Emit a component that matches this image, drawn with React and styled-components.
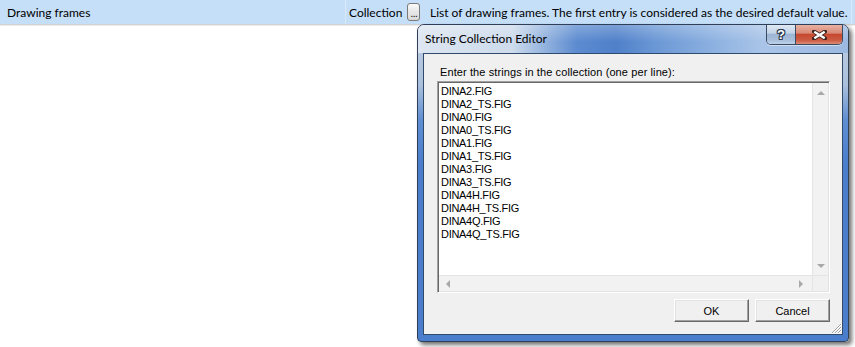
import React from "react";
import styled, { createGlobalStyle } from "styled-components";

const GlobalStyle = createGlobalStyle`
  html, body {
    margin: 0;
    padding: 0;
    background: #fff;
  }
  body {
    font-family: "Segoe UI", Lato, "Liberation Sans", sans-serif;
    color: #000;
  }
`;

const Page = styled.div`
  position: relative;
  width: 855px;
  height: 347px;
  overflow: hidden;
  background: #fff;
`;

const PropertyRow = styled.div`
  display: flex;
  height: 24px;
  background: #c5dff9;
  border-bottom: 1px solid #d2d2d2;
  box-shadow: 0 1px 0 #ececec;
`;

const Cell = styled.div`
  box-sizing: border-box;
  display: flex;
  align-items: center;
  width: ${(p) => p.$w}px;
  padding-left: ${(p) => p.$pad}px;
  border-right: ${(p) => (p.$line ? "1px solid #dce9f8" : "none")};
  font-size: 12px;
  white-space: nowrap;
`;

const EllipsisButton = styled.div`
  box-sizing: border-box;
  width: 13px;
  height: 18px;
  margin-left: 5px;
  border: 1px solid #7a7a7a;
  border-radius: 3px;
  background: linear-gradient(#fafafa, #e6e6e6 50%, #d9d9d9);
  display: flex;
  align-items: flex-end;
  justify-content: center;
  font-family: "Liberation Sans", sans-serif;
  font-size: 10px;
  line-height: 12px;
  letter-spacing: -0.5px;
`;

/* the dialog floats over the grid like a desktop window */
const Window = styled.div`
  position: absolute;
  left: 417px;
  top: 24px;
  width: 432px;
  height: 318px;
  box-sizing: border-box;
  display: flex;
  flex-direction: column;
  border: 1px solid #2f3f57;
  border-radius: 7px 7px 4px 4px;
  overflow: hidden;
  background: linear-gradient(
    #c3d1e3 0px,
    #aac0dc 60px,
    #5f8ed2 95px,
    #4a7dcb 140px,
    #4a7dcb 100%
  );
  box-shadow: 3px 3px 4px rgba(0, 0, 0, 0.55);
`;

const TitleBar = styled.div`
  height: 28px;
  flex: none;
  display: flex;
  justify-content: space-between;
  align-items: flex-start;
  padding: 0 5px 0 7px;
  background:
    linear-gradient(rgba(255, 255, 255, 0.25), rgba(255, 255, 255, 0) 60%),
    linear-gradient(
      to right,
      #dde6f1 0%,
      #cddbec 22%,
      #8fb0dd 30%,
      #5c8bd0 37%,
      #4f80c9 46%,
      #6a97d5 55%,
      #8bb0e0 68%,
      #a9c4e8 80%,
      #9cb9e1 100%
    );
`;

const TitleText = styled.div`
  margin-top: 7px;
  font-size: 12px;
  line-height: 14px;
  color: #000;
`;

const CaptionButtons = styled.div`
  display: flex;
  height: 19px;
  border: 1px solid #3a4a62;
  border-top: none;
  border-radius: 0 0 5px 5px;
  overflow: hidden;
  box-shadow: 0 1px 0 rgba(255, 255, 255, 0.5);
`;

const CaptionButton = styled.div`
  width: ${(p) => p.$w}px;
  height: 100%;
  display: flex;
  align-items: center;
  justify-content: center;
  background: ${(p) =>
    p.$close
      ? "linear-gradient(#e9b1a3, #d98a77 42%, #c6492f 50%, #cc5a43 80%, #dd8c76)"
      : "linear-gradient(#dfe8f3, #c3d3e7 42%, #9db5d4 50%, #a8bfdc 80%, #bfd2ea)"};
  & + & {
    border-left: 1px solid #3a4a62;
  }
`;

const HelpMark = styled.span`
  font-family: "Liberation Sans", Arial, sans-serif;
  font-weight: bold;
  font-size: 13px;
  line-height: 13px;
  color: #fff;
  text-shadow:
    1px 0 0 #2c3a50, -1px 0 0 #2c3a50, 0 1px 0 #2c3a50, 0 -1px 0 #2c3a50,
    1px 1px 0 #2c3a50, -1px -1px 0 #2c3a50, 1px -1px 0 #2c3a50, -1px 1px 0 #2c3a50;
`;

const FrameBody = styled.div`
  flex: 1;
  display: flex;
  padding: 0 5px 6px 5px;
  min-height: 0;
`;

const Client = styled.div`
  position: relative;
  flex: 1;
  display: flex;
  flex-direction: column;
  padding: 12px 12px 12px 13px;
  border: 1px solid #304a6c;
  background: #f0f0f0;
  font-family: "Liberation Sans", Arial, sans-serif;
  font-size: 11px;
`;

const Prompt = styled.div`
  margin-left: 3px;
  height: 13px;
  line-height: 13px;
  letter-spacing: 0.1px;
  color: #000;
`;

const ListBox = styled.div`
  box-sizing: border-box;
  margin-top: 2px;
  height: 212px;
  display: grid;
  grid-template-columns: 1fr 16px;
  grid-template-rows: 1fr 16px;
  border: 1px solid;
  border-color: #a0a0a0 #fff #fff #a0a0a0;
  box-shadow: inset 1px 1px 0 #696969, inset -1px -1px 0 #e3e3e3;
  background: #fff;
  padding: 1px;
`;

const Lines = styled.div`
  padding: 2px 0 0 2px;
  line-height: 13px;
  letter-spacing: -0.3px;
  overflow: hidden;
`;

const ScrollBar = styled.div`
  display: flex;
  flex-direction: ${(p) => (p.$vertical ? "column" : "row")};
  align-items: center;
  justify-content: space-between;
  padding: ${(p) => (p.$vertical ? "8px 0 7px" : "0 9px 0 7px")};
  background: #f2f2f2;
  border-${(p) => (p.$vertical ? "left" : "top")}: 1px solid #e4e4e4;
`;

const Corner = styled.div`
  background: #f0f0f0;
  border-left: 1px solid #e4e4e4;
  border-top: 1px solid #e4e4e4;
`;

const Arrow = styled.div`
  width: 0;
  height: 0;
  border-style: solid;
  ${(p) =>
    p.$dir === "up"
      ? "border-width: 0 4px 4px 4px; border-color: transparent transparent #a8a8a8 transparent;"
      : p.$dir === "down"
      ? "border-width: 4px 4px 0 4px; border-color: #a8a8a8 transparent transparent transparent;"
      : p.$dir === "left"
      ? "border-width: 4px 4px 4px 0; border-color: transparent #a8a8a8 transparent transparent;"
      : "border-width: 4px 0 4px 4px; border-color: transparent transparent transparent #a8a8a8;"}
`;

const ButtonRow = styled.div`
  display: flex;
  justify-content: flex-end;
  gap: 6px;
  margin-top: 6px;
`;

const PushButton = styled.div`
  box-sizing: border-box;
  width: 75px;
  height: 23px;
  display: flex;
  align-items: center;
  justify-content: center;
  border: 1px solid;
  border-color: #fff #696969 #696969 #fff;
  box-shadow: inset -1px -1px 0 #a0a0a0, inset 1px 1px 0 #e3e3e3;
  background: #f0f0f0;
  font-size: 11px;
  color: #000;
`;

const Grip = styled.svg`
  position: absolute;
  right: 0;
  bottom: 0;
`;

const entries = [
  "DINA2.FIG",
  "DINA2_TS.FIG",
  "DINA0.FIG",
  "DINA0_TS.FIG",
  "DINA1.FIG",
  "DINA1_TS.FIG",
  "DINA3.FIG",
  "DINA3_TS.FIG",
  "DINA4H.FIG",
  "DINA4H_TS.FIG",
  "DINA4Q.FIG",
  "DINA4Q_TS.FIG",
];

function CloseGlyph() {
  return (
    <svg width="15" height="10" viewBox="0 0 15 10">
      <path d="M2 1.5 L13 8.5 M13 1.5 L2 8.5" stroke="#3b2420" strokeWidth="4" strokeLinecap="square" />
      <path d="M2.3 1.7 L12.7 8.3 M12.7 1.7 L2.3 8.3" stroke="#fff" strokeWidth="2.2" />
    </svg>
  );
}

export default function App() {
  return (
    <Page>
      <GlobalStyle />
      <PropertyRow>
        <Cell $w={346} $pad={7} $line>
          Drawing frames
        </Cell>
        <Cell $w={80} $pad={3}>
          Collection
          <EllipsisButton>...</EllipsisButton>
        </Cell>
        <Cell $w={426} $pad={4} $line>
          List of drawing frames. The first entry is considered as the desired default value.
        </Cell>
      </PropertyRow>

      <Window>
        <TitleBar>
          <TitleText>String Collection Editor</TitleText>
          <CaptionButtons>
            <CaptionButton $w={28}>
              <HelpMark>?</HelpMark>
            </CaptionButton>
            <CaptionButton $w={46} $close>
              <CloseGlyph />
            </CaptionButton>
          </CaptionButtons>
        </TitleBar>
        <FrameBody>
          <Client>
            <Prompt>Enter the strings in the collection (one per line):</Prompt>
            <ListBox>
              <Lines>
                {entries.map((e) => (
                  <div key={e}>{e}</div>
                ))}
              </Lines>
              <ScrollBar $vertical>
                <Arrow $dir="up" />
                <Arrow $dir="down" />
              </ScrollBar>
              <ScrollBar>
                <Arrow $dir="left" />
                <Arrow $dir="right" />
              </ScrollBar>
              <Corner />
            </ListBox>
            <ButtonRow>
              <PushButton>OK</PushButton>
              <PushButton>Cancel</PushButton>
            </ButtonRow>
            <Grip width="12" height="12" viewBox="0 0 12 12">
              <path d="M11 2 L2 11 M11 5 L5 11 M11 8 L8 11" stroke="#a0a0a0" strokeWidth="1" />
              <path d="M12 2 L2 12 M12 5 L5 12 M12 8 L8 12" stroke="#fff" strokeWidth="1" />
            </Grip>
          </Client>
        </FrameBody>
      </Window>
    </Page>
  );
}
